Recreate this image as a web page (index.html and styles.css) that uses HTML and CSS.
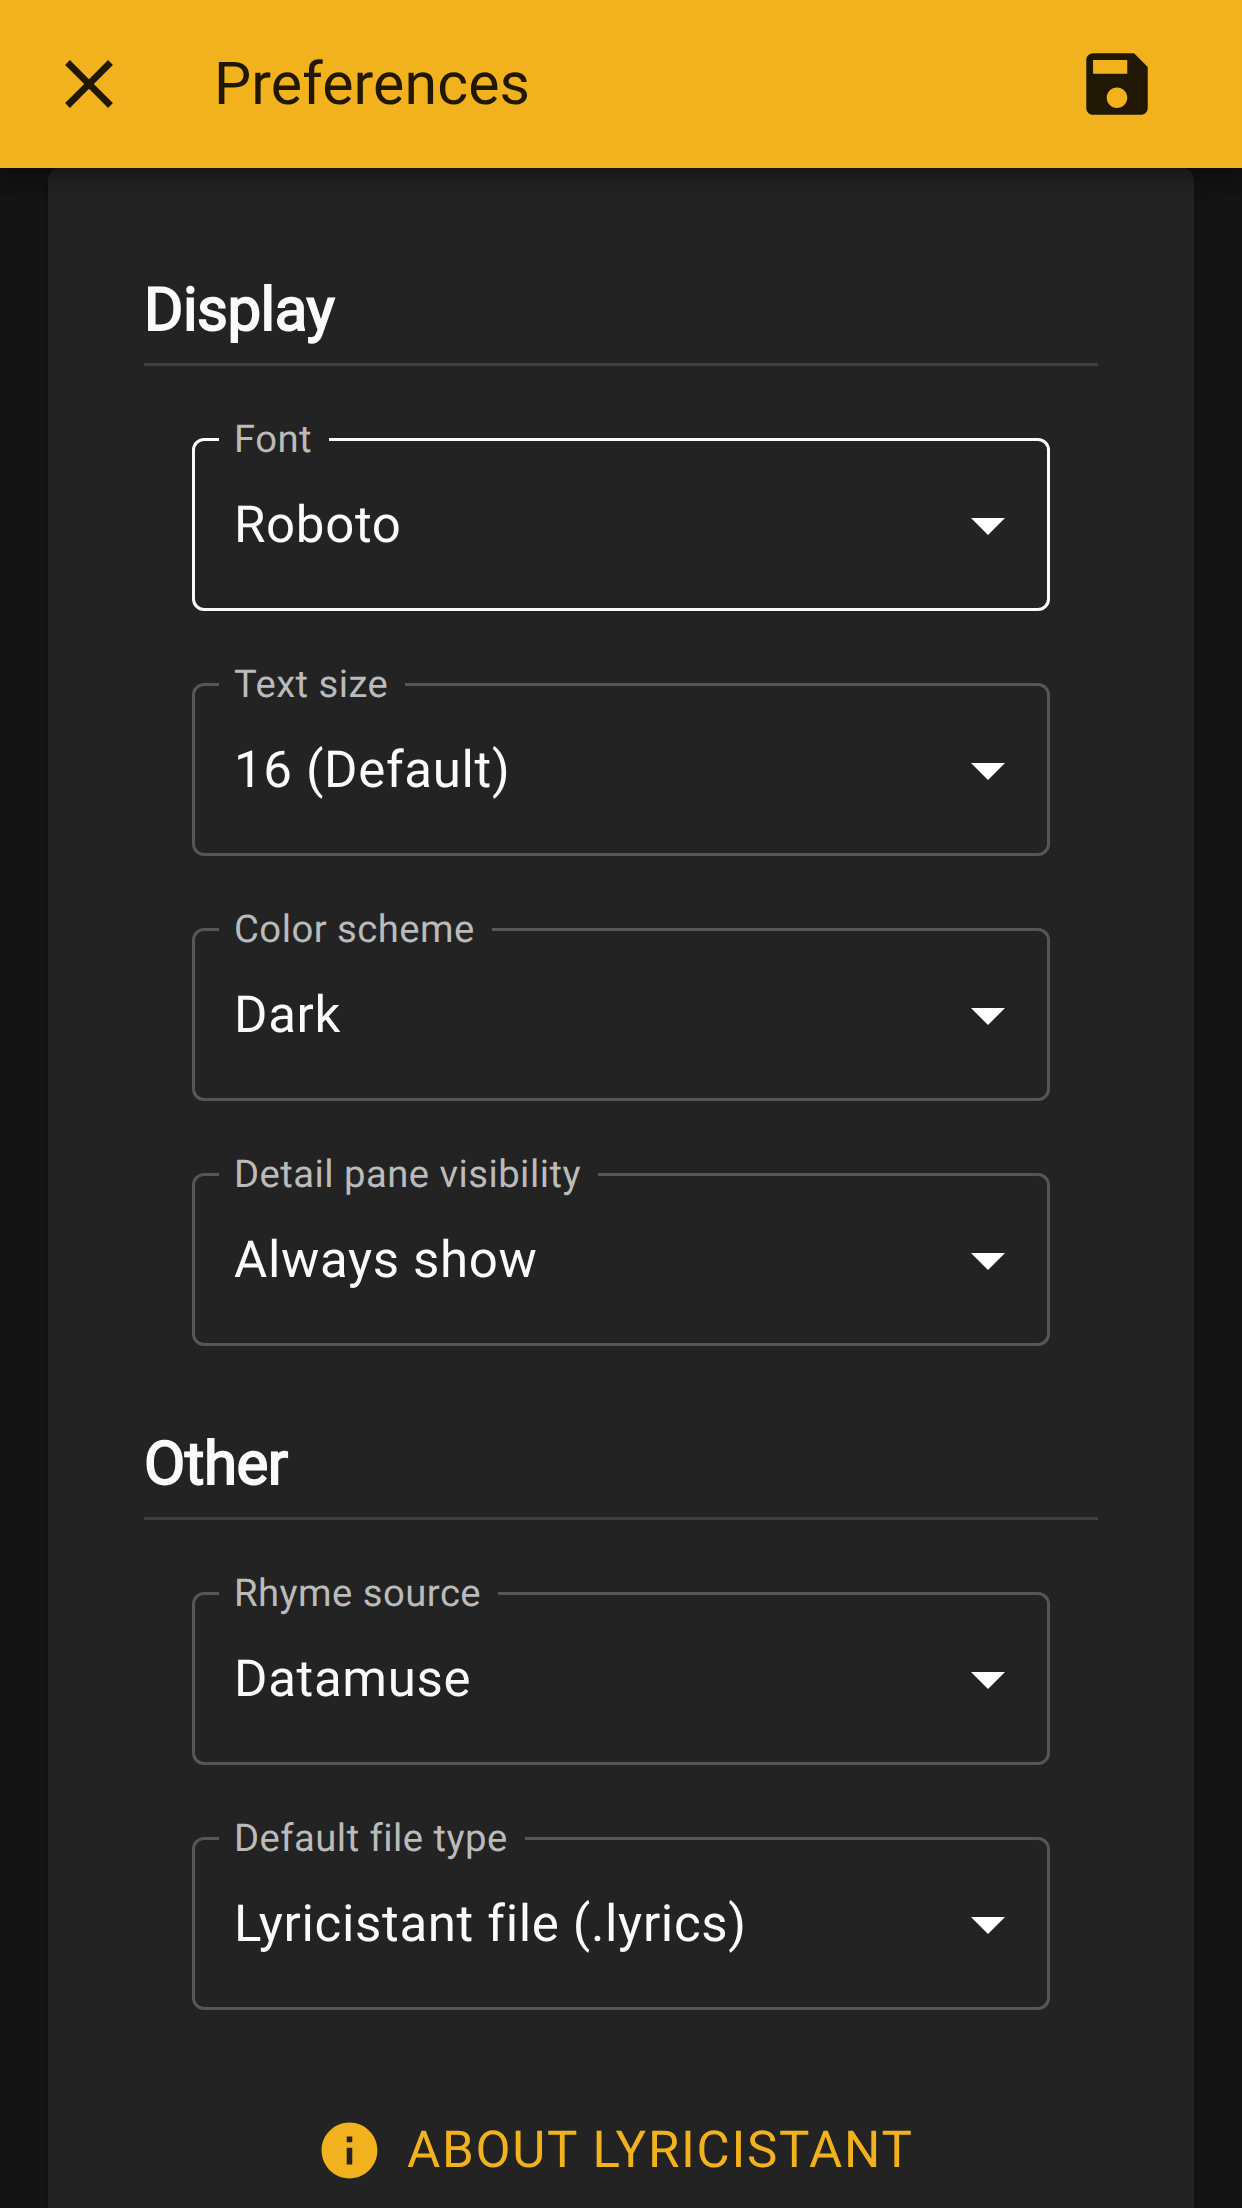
FILE: index.html
```html
<!DOCTYPE html>
<html lang="en">
<head>
<meta charset="utf-8">
<title>Preferences</title>
<link rel="stylesheet" href="styles.css">
</head>
<body>
<header class="app-bar">
  <button class="icon-button" aria-label="Close">
    <svg class="icon" viewBox="0 0 24 24"><path d="M19 6.41L17.59 5 12 10.59 6.41 5 5 6.41 10.59 12 5 17.59 6.41 19 12 13.41 17.59 19 19 17.59 13.41 12z"/></svg>
  </button>
  <h1 class="title">Preferences</h1>
  <button class="icon-button" aria-label="Save">
    <svg class="icon" viewBox="0 0 24 24"><path d="M17 3H5c-1.11 0-2 .9-2 2v14c0 1.1.89 2 2 2h14c1.1 0 2-.9 2-2V7l-4-4zm-5 16c-1.66 0-3-1.34-3-3s1.34-3 3-3 3 1.34 3 3-1.34 3-3 3zm3-10H5V5h10v4z"/></svg>
  </button>
</header>
<main class="card">
  <section class="section">
    <h2 class="heading">Display</h2>
    <div class="fields">
      <fieldset class="field field-active">
        <legend class="label">Font</legend>
        <span class="value">Roboto</span>
        <svg class="arrow" viewBox="0 0 10 5"><path d="M0 0l5 5 5-5z"/></svg>
      </fieldset>
      <fieldset class="field">
        <legend class="label">Text size</legend>
        <span class="value">16 (Default)</span>
        <svg class="arrow" viewBox="0 0 10 5"><path d="M0 0l5 5 5-5z"/></svg>
      </fieldset>
      <fieldset class="field">
        <legend class="label">Color scheme</legend>
        <span class="value">Dark</span>
        <svg class="arrow" viewBox="0 0 10 5"><path d="M0 0l5 5 5-5z"/></svg>
      </fieldset>
      <fieldset class="field">
        <legend class="label">Detail pane visibility</legend>
        <span class="value">Always show</span>
        <svg class="arrow" viewBox="0 0 10 5"><path d="M0 0l5 5 5-5z"/></svg>
      </fieldset>
    </div>
  </section>
  <section class="section">
    <h2 class="heading">Other</h2>
    <div class="fields">
      <fieldset class="field">
        <legend class="label">Rhyme source</legend>
        <span class="value">Datamuse</span>
        <svg class="arrow" viewBox="0 0 10 5"><path d="M0 0l5 5 5-5z"/></svg>
      </fieldset>
      <fieldset class="field">
        <legend class="label">Default file type</legend>
        <span class="value">Lyricistant file (.lyrics)</span>
        <svg class="arrow" viewBox="0 0 10 5"><path d="M0 0l5 5 5-5z"/></svg>
      </fieldset>
    </div>
  </section>
  <button class="about">
    <svg class="about-icon" viewBox="0 0 24 24"><path d="M12 2C6.48 2 2 6.48 2 12s4.48 10 10 10 10-4.48 10-10S17.52 2 12 2zm1 15h-2v-6h2v6zm0-8h-2V7h2v2z"/></svg>
    <span>About Lyricistant</span>
  </button>
</main>
</body>
</html>
```
FILE: styles.css
```css
* {
  box-sizing: border-box;
}

body {
  margin: 0;
  height: 2208px;
  overflow: hidden;
  display: flex;
  flex-direction: column;
  background: #141414;
  color: #fafafa;
  font-family: Roboto, sans-serif;
  font-size: 51px;
  text-rendering: geometricPrecision;
}

button {
  padding: 0;
  border: 0;
  background: none;
  color: inherit;
  font: inherit;
  text-rendering: inherit;
}

.app-bar {
  position: relative;
  z-index: 1;
  flex: none;
  display: flex;
  align-items: center;
  height: 168px;
  padding: 0 84px 0 48px;
  background: #f2b21d;
  color: #201805;
  box-shadow: 0 6px 12px -3px rgba(0, 0, 0, 0.2), 0 12px 15px rgba(0, 0, 0, 0.14), 0 3px 30px rgba(0, 0, 0, 0.12);
}

.icon-button {
  display: flex;
}

.icon {
  width: 82px;
  height: 82px;
  fill: currentColor;
}

.title {
  flex: 1;
  margin: 0 0 0 84px;
  padding-top: 2px;
  font-size: 59px;
  font-weight: 400;
  line-height: 90px;
  letter-spacing: 0.1px;
}

.card {
  flex: none;
  height: 2100px;
  margin: 0 48px;
  padding: 106px 96px 0;
  border-radius: 12px;
  background: #232323;
  box-shadow: 0 3px 9px rgba(0, 0, 0, 0.25);
}

.section + .section {
  margin-top: 82px;
}

.heading {
  margin: 0;
  padding-bottom: 17px;
  border-bottom: 3px solid #3e3e3e;
  font-size: 60px;
  font-weight: 400;
  line-height: 72px;
  letter-spacing: -0.5px;
  -webkit-text-stroke: 1.8px currentColor;
}

.fields {
  display: flex;
  flex-direction: column;
  gap: 72px;
  padding: 72px 48px 0;
}

.field {
  display: flex;
  align-items: center;
  justify-content: space-between;
  height: 173px;
  min-width: 0;
  margin: 0;
  padding: 0 42px 0 39px;
  border: 3px solid #565656;
  border-radius: 12px;
}

.field-active {
  border-color: #fafafa;
}

.label {
  height: 3px;
  margin-left: -15px;
  padding: 0 17px 0 15px;
  color: #bbbbbb;
  font-size: 38.25px;
  line-height: 4px;
  letter-spacing: 0.012em;
}

.value {
  line-height: 169px;
  letter-spacing: 0.013em;
}

.arrow {
  width: 34px;
  height: 17px;
  margin-top: 2px;
  fill: #ffffff;
}

.about {
  display: flex;
  align-items: center;
  gap: 24px;
  margin: 107px 0 0 172px;
  color: #f2b21d;
  line-height: 66px;
  letter-spacing: 0.033em;
  text-transform: uppercase;
}

.about span {
  padding-top: 1px;
}

.about-icon {
  width: 67px;
  height: 67px;
  fill: currentColor;
}
```
